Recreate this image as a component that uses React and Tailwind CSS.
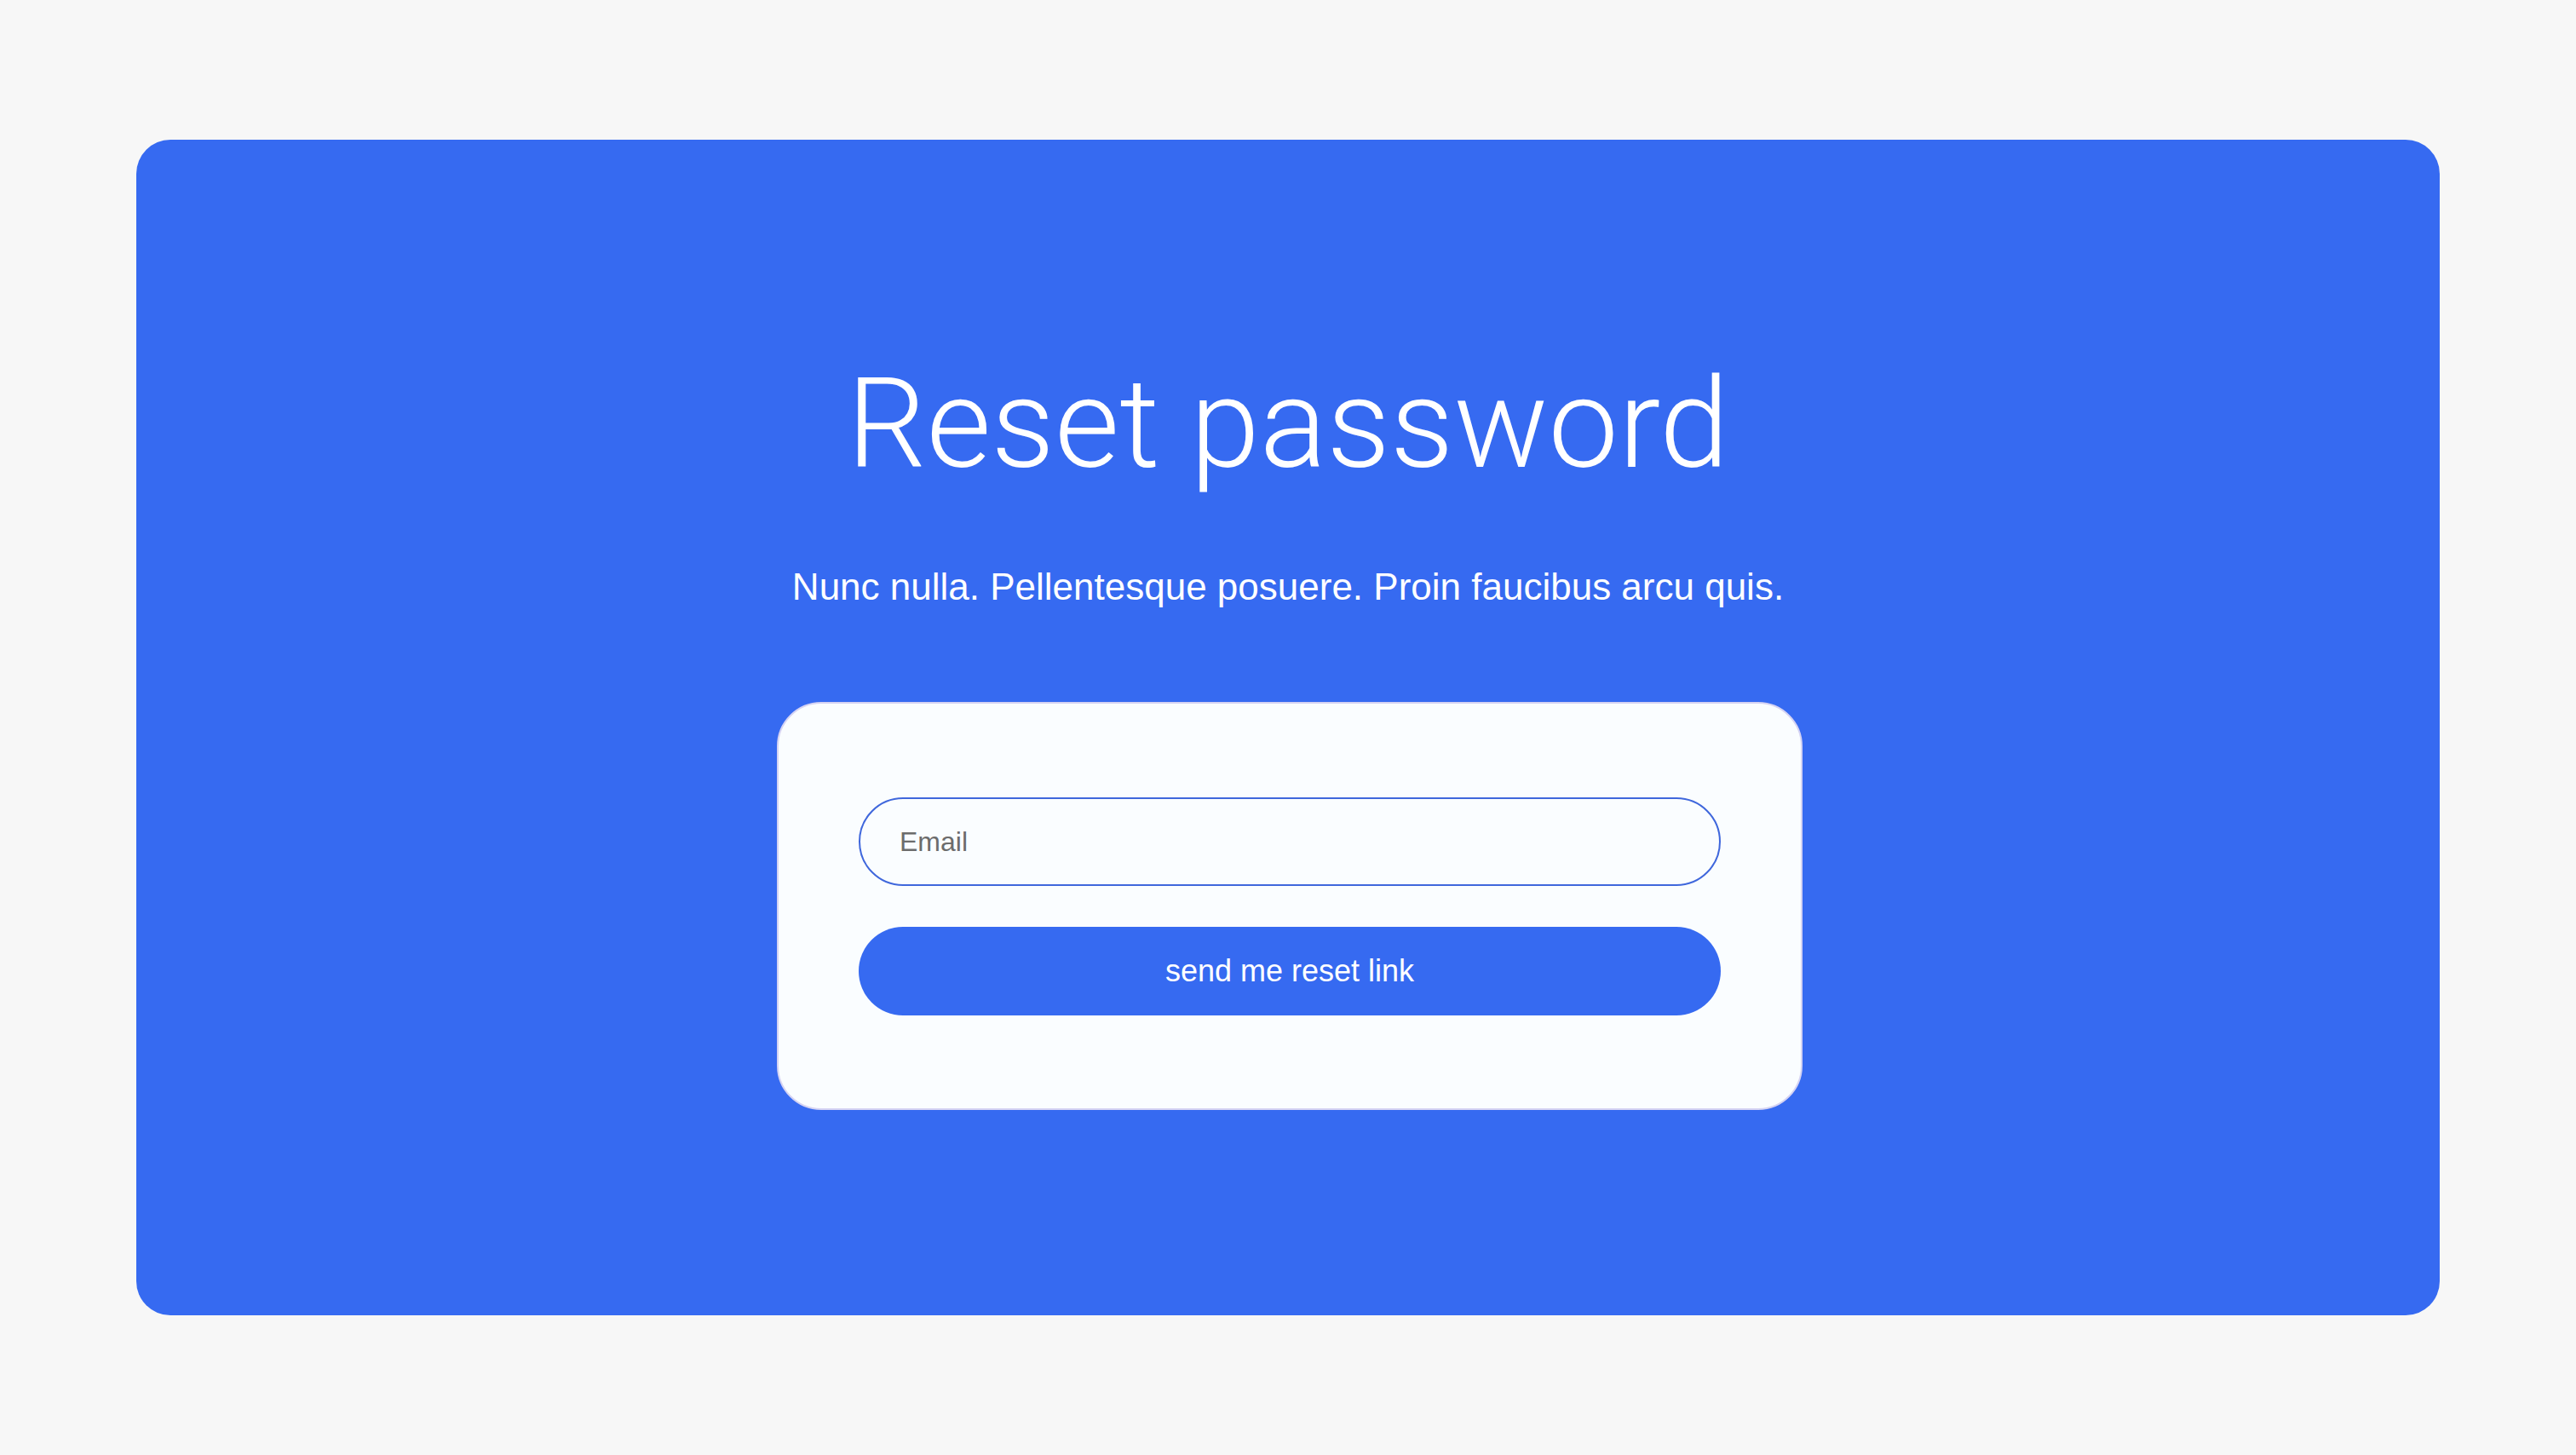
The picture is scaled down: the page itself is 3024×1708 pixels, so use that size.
import React, { useState } from "react";

export default function App() {
    const [email, setEmail] = useState("");

    return (
        <div className="w-full min-h-screen bg-[#f7f7f7] px-[160px] pt-[164px] pb-[164px] font-['Liberation_Sans',Arial,sans-serif]">

            {/* Blue panel */}
            <section className="w-full h-[1380px] bg-[#366af1] rounded-[40px] flex flex-col items-center pt-[261px]">

                <h1 className="text-white text-[147px] leading-none font-light font-['Roboto','Liberation_Sans',sans-serif]">
                    Reset password
                </h1>

                <p className="mt-[95px] text-white text-[44px] leading-none">
                    Nunc nulla. Pellentesque posuere. Proin faucibus arcu quis.
                </p>

                {/* Form card */}
                <form
                    onSubmit={(e) => e.preventDefault()}
                    className="mt-[113px] ml-[4px] w-[1204px] bg-[#fafdff] border-2 border-[#d5d3f3] rounded-[52px] px-[94px] pt-[110px] pb-[109px] flex flex-col gap-[48px]"
                >
                    <input
                        type="email"
                        value={email}
                        onChange={(e) => setEmail(e.target.value)}
                        placeholder="Email"
                        className="w-full h-[104px] rounded-full border-2 border-[#3f67dc] bg-transparent pl-[46px] pr-[46px] text-[32px] text-[#333] placeholder:text-[#6c6c6c] outline-none"
                    />

                    <button
                        type="submit"
                        className="w-full h-[104px] rounded-full bg-[#366af1] text-white text-[36px]"
                    >
                        send me reset link
                    </button>
                </form>
            </section>
        </div>
    );
}
